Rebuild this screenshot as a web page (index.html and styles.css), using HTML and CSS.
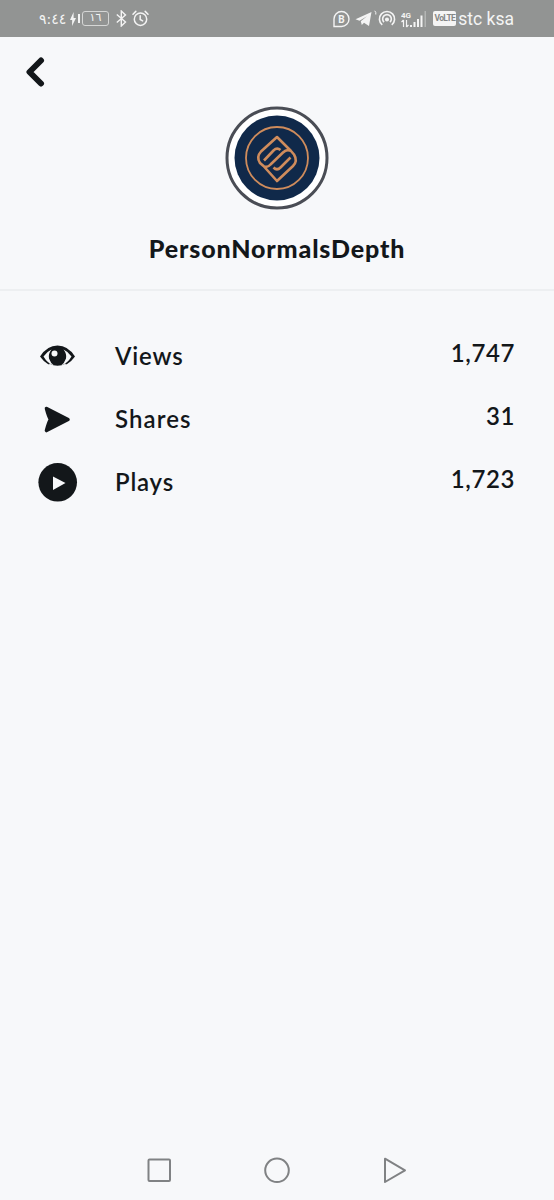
FILE: index.html
```
<!DOCTYPE html>
<html lang="en">
<head>
    <meta charset="UTF-8">
    <meta name="viewport" content="width=device-width, initial-scale=1.0">
    <title>PersonNormalsDepth</title>
    <link rel="stylesheet" href="styles.css">
</head>
<body>
    <div class="status-bar">
        <div class="status-left">
            <bdo dir="ltr" class="time">٩:٤٤</bdo>
            <svg class="bolt" width="6" height="14" viewBox="0 0 6 14"><path d="M3.6 0 0 8h2.2L2 14l4-8H3.6z" fill="#f4f4f4"/></svg>
            <div class="battery-tip"></div>
            <div class="battery"><bdo dir="ltr">١٦</bdo></div>
            <svg class="bluetooth" width="11" height="17" viewBox="0 0 11 17"><path d="M.8 4.500 9.500 12 5.300 16V1l4.200 4L.8 12.500" fill="none" stroke="#f4f4f4" stroke-width="1.4"/></svg>
            <svg class="alarm" width="17" height="17" viewBox="0 0 17 17" fill="none" stroke="#f4f4f4" stroke-width="1.5" stroke-linecap="round"><circle cx="8.5" cy="9.2" r="6.2"/><path d="M8.200 5.800v3.700l2.400 1.400M1 4.200 3.800 1.400M16 4.200l-2.800-2.800"/></svg>
        </div>
        <div class="status-right">
            <svg width="17" height="18" viewBox="0 0 17 18"><path d="M1 16.500V9a7.500 7.500 0 1 1 7.500 7.500z" fill="none" stroke="#f4f4f4" stroke-width="1.4"/><text class="badge-letter" x="8.500" y="12.500" text-anchor="middle">B</text></svg>
            <svg class="telegram" width="17" height="16" viewBox="0 0 17 16"><path d="M.5 8.200 16.500 1 14 15 9 11.700 6.800 14 5.800 10.300 12 5.300 4.500 9.800z" fill="#f4f4f4"/></svg>
            <svg class="tick" width="3" height="17" viewBox="0 0 3 17"><path d="M.7.8Q2.300 2 1.800 4.500" fill="none" stroke="#f4f4f4"/></svg>
            <svg class="hotspot" width="18" height="17" viewBox="0 0 19 17" fill="none" stroke="#f4f4f4" stroke-width="1.700"><path d="M4.500 15.300a8 8 0 1 1 10 0M6.300 12.300a4.600 4.600 0 1 1 6.400 0"/><circle cx="9.500" cy="9.500" r="1.300" fill="#f4f4f4"/></svg>
            <svg class="signal" width="26" height="19" viewBox="0 0 26 19"><text class="net-type" x="0" y="8.500">4G</text><path d="M2.500 11v7M.5 13l2-2M5.500 18v-7M5.500 18l2-2" stroke="#f4f4f4" stroke-width="1.200" fill="none"/><path d="M9 16h2v2H9zM12.500 13h2v5h-2zM16 10h2v8h-2zM19.500 6.500h2V18h-2z" fill="#f4f4f4"/><path d="M23.500 2H25v16h-1.500z" fill="#b3b5b4"/></svg>
            <div class="volte">VoLTE</div>
            <span class="carrier">stc ksa</span>
        </div>
    </div>

    <div class="header">
        <svg class="back" width="20" height="32" viewBox="0 0 20 32"><path d="M16 4.500 4.500 16 16 27.500" fill="none" stroke="#13171a" stroke-width="6" stroke-linecap="round" stroke-linejoin="round"/></svg>
        <svg class="avatar" width="104" height="104" viewBox="0 0 104 104" fill="none">
            <circle cx="52" cy="52" r="50" fill="#fff" stroke="#4a4d55" stroke-width="3"/>
            <circle cx="52" cy="52" r="42.500" fill="#10294a"/>
            <g stroke="#cf8c5c">
                <circle cx="52" cy="52" r="31" stroke-width="1.800"/>
                <g stroke-width="2.600" stroke-linejoin="round">
                    <path d="M66 45 52 31 36 45.500Q31 51 35 57L38.500 60Q42 62.500 45.500 58.500L58 46.500Q62 42.500 66 45L69 48.500Q73 55 68 60L52 75 38.500 60"/>
                    <path d="M39 54.500 48.500 44.500Q52 41 55.500 44M65.500 51.500 55.500 61.500Q52 65 48.500 61.500"/>
                </g>
            </g>
        </svg>
        <h1>PersonNormalsDepth</h1>
    </div>

    <div class="stats">
        <div class="stat">
            <svg class="stat-icon" width="40" height="40" viewBox="0 0 40 40">
                <path d="M2 20.500Q9 9.500 19.500 9.500T37 20.500Q30 30.500 19.500 30.500T2 20.500z" fill="#13171a"/>
                <path d="M5.500 20.500Q9 15.500 13.500 13.500Q10 18 11 22.500Q12.500 27 16 29.500Q9.500 27.500 5.500 20.500zM33.500 20.500Q30 15.500 25.500 13.500Q29 18 28 22.500Q26.500 27 23 29.500Q29.500 27.500 33.500 20.500z" fill="#f7f8fa"/>
                <path d="M11 27.500Q19.500 32 28 27.500L27 32H12z" fill="#f7f8fa"/>
                <circle cx="19.500" cy="20.500" r="8" fill="#13171a"/>
                <circle cx="16.500" cy="17.500" r="3" fill="#f7f8fa"/>
            </svg>
            <span class="label">Views</span>
            <span class="value">1,747</span>
        </div>
        <div class="stat">
            <svg class="stat-icon" width="40" height="40" viewBox="0 0 40 40"><path d="M8.500 9.500 30 20.500 8.500 31.500Q10.500 24 12.500 20.500Q10.500 17 8.500 9.500z" fill="#13171a" stroke="#13171a" stroke-width="3.600" stroke-linejoin="round"/></svg>
            <span class="label wide">Shares</span>
            <span class="value">31</span>
        </div>
        <div class="stat">
            <svg class="stat-icon" width="40" height="40" viewBox="0 0 40 40"><circle cx="19.700" cy="20.300" r="19.300" fill="#13171a"/><path d="M15 14.500 27.500 21 15 28z" fill="#f7f8fa"/></svg>
            <span class="label">Plays</span>
            <span class="value">1,723</span>
        </div>
    </div>

    <div class="nav-bar">
        <svg width="26" height="28" viewBox="0 0 26 28"><rect x="2.500" y="3.500" width="21.500" height="21.500" rx="1"/></svg>
        <svg width="26" height="28" viewBox="0 0 26 28"><circle cx="13" cy="14.300" r="11.800"/></svg>
        <svg width="26" height="28" viewBox="0 0 26 28"><path d="M3 2.700 23 14.300 3 26z"/></svg>
    </div>
</body>
</html>
```
FILE: styles.css
```
* {
    box-sizing: border-box;
}
body {
    font-family: Lato, "Open Sans", sans-serif;
    background-color: #f7f8fa;
    color: #13171a;
    margin: 0;
    height: 1200px;
    display: flex;
    flex-direction: column;
}
svg {
    display: block;
    flex-shrink: 0;
}
.status-bar {
    height: 37px;
    background-color: #929493;
    color: #f4f4f4;
    display: flex;
    justify-content: space-between;
    padding: 0 40px 0 39px;
}
.status-left,
.status-right {
    display: flex;
    align-items: center;
}
.time {
    font-family: "DejaVu Sans", sans-serif;
    font-size: 14px;
    width: 27px;
    white-space: nowrap;
}
.bolt {
    margin-left: 4px;
}
.battery-tip {
    width: 2px;
    height: 9px;
    margin-left: 2px;
    background: #f4f4f4;
}
.battery {
    width: 27px;
    height: 15px;
    margin-left: 2px;
    border: 1px solid #d5d6d5;
    border-radius: 3px;
    font: 11px/12px "DejaVu Sans", sans-serif;
    text-align: center;
}
.bluetooth {
    margin-left: 7px;
}
.alarm {
    margin-left: 5px;
}
.badge-letter {
    font: bold 10px Roboto, sans-serif;
    fill: #f4f4f4;
}
.telegram {
    margin-left: 5px;
}
.tick {
    margin-left: 2px;
}
.hotspot {
    margin-left: 1px;
}
.signal {
    margin-left: 5px;
}
.net-type {
    font: bold 8px Roboto, sans-serif;
    fill: #f4f4f4;
}
.volte {
    width: 23px;
    height: 15px;
    margin-left: 6px;
    border-radius: 2px;
    background: #f4f4f4;
    color: #858786;
    font: bold 8.5px/15px Roboto, sans-serif;
    letter-spacing: -0.6px;
    text-align: center;
}
.carrier {
    margin-left: 2px;
    font: 17.5px Roboto, sans-serif;
}
.header {
    height: 254px;
    padding-top: 19px;
    border-bottom: 2px solid #edeff1;
    display: flex;
    flex-direction: column;
    align-items: center;
}
.back {
    align-self: flex-start;
    margin-left: 25px;
}
.avatar {
    margin-top: 18px;
}
h1 {
    margin: 22px 0 0;
    font-size: 25px;
    font-weight: 900;
    line-height: 32px;
    letter-spacing: 0.85px;
}
.stats {
    padding: 33px 39px 0 38px;
}
.stat {
    height: 63px;
    display: flex;
    align-items: center;
    font-size: 24px;
    font-weight: 600;
    line-height: 30px;
}
.label {
    flex: 1;
    margin: 0 0 0 37px;
    letter-spacing: 0.8px;
}
.label.wide {
    letter-spacing: 1.1px;
}
.value {
    margin-bottom: 5px;
    letter-spacing: 0.6px;
}
.nav-bar {
    margin-top: auto;
    height: 60px;
    display: flex;
    justify-content: center;
    align-items: center;
    gap: 92px;
}
.nav-bar svg {
    fill: none;
    stroke: #808284;
    stroke-width: 2;
    stroke-linejoin: round;
}
```
